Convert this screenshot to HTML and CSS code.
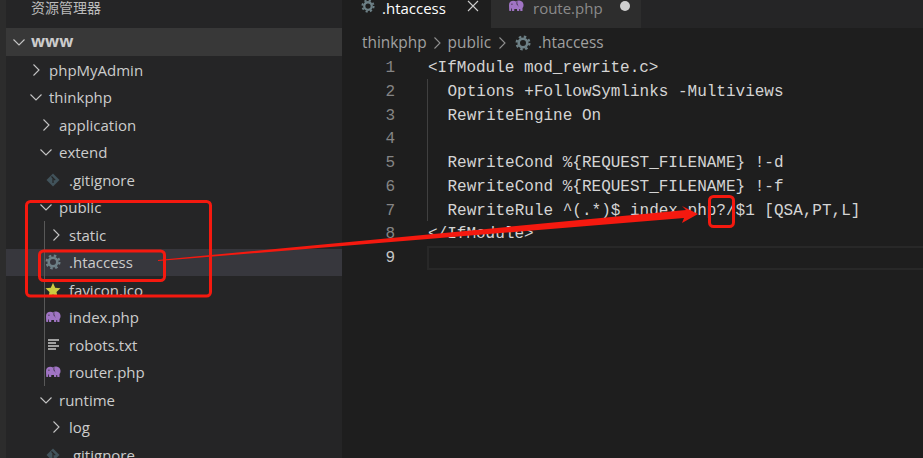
FILE: index.html
```html
<!DOCTYPE html>
<html lang="zh">
<head>
<meta charset="utf-8">
<title>.htaccess - thinkphp</title>
<link rel="stylesheet" href="styles.css">
</head>
<body>
<svg class="defs" width="0" height="0" aria-hidden="true">
  <symbol id="gear" viewBox="0 0 16 16">
    <circle cx="8" cy="8" r="4.3" fill="none" stroke="currentColor" stroke-width="2.6"/>
    <circle cx="8" cy="8" r="6.4" fill="none" stroke="currentColor" stroke-width="2.2" stroke-dasharray="2.5 2.53"/>
  </symbol>
  <symbol id="php" viewBox="0 0 16 12">
    <path fill="currentColor" d="M1 5C1 2.200 3 .8 5.300 .8c1.200 0 2 .3 2.700 .8C8.800 .8 10 .4 11.400 .6c2.300 .3 3.900 1.800 4.100 3.800.1 1.300-.1 2.600-1 3.500v2.800c0 .3-.2 .4-.5 .4h-1.300c-.3 0-.5-.2-.5-.5V8.900l-.9 .1v1.600c0 .3-.2 .5-.5 .5H9.500c-.3 0-.5-.2-.5-.5V9.100H6.300v1.500c0 .3-.2 .5-.5 .5H4.400c-.3 0-.5-.2-.5-.5V8.800L3.100 8.300v2.300c0 .3-.2 .5-.5 .5h-.9c-.3 0-.5-.2-.5-.5Z"/>
    <path fill="none" stroke="#252526" stroke-width=".7" stroke-linecap="round" d="M9 1.800C8.600 3.200 8.800 4.900 10 5.700M3.500 4.200h.8"/>
  </symbol>
  <symbol id="right" viewBox="0 0 16 16">
    <path fill="none" stroke="currentColor" stroke-width="1.100" d="M5.500 2.500 11 8l-5.500 5.500"/>
  </symbol>
  <symbol id="down" viewBox="0 0 16 16">
    <path fill="none" stroke="currentColor" stroke-width="1.100" d="M2.500 5.500 8 11l5.500-5.500"/>
  </symbol>
  <symbol id="git" viewBox="0 0 16 16">
    <path fill="currentColor" d="M8 1.500 14.500 8 8 14.500 1.500 8Z"/>
    <path fill="none" stroke="#252526" stroke-width="1.200" d="M6.500 4.500 10.200 8.200M8 6v5"/>
  </symbol>
</svg>

<div class="window">
  <div class="strip"></div>

  <aside class="sidebar">
    <div class="explorer-title">资源管理器</div>
    <div class="section"><svg class="chev"><use href="#down"/></svg><span>www</span></div>
    <div class="tree">
      <div class="row l1"><svg class="chev"><use href="#right"/></svg><span>phpMyAdmin</span></div>
      <div class="row l1"><svg class="chev"><use href="#down"/></svg><span>thinkphp</span></div>
      <div class="row l2"><svg class="chev"><use href="#right"/></svg><span>application</span></div>
      <div class="row l2"><svg class="chev"><use href="#down"/></svg><span>extend</span></div>
      <div class="row l3"><svg class="ficon git"><use href="#git"/></svg><span>.gitignore</span></div>
      <div class="row l2"><svg class="chev"><use href="#down"/></svg><span>public</span></div>
      <div class="guided">
        <div class="row l3c"><svg class="chev"><use href="#right"/></svg><span>static</span></div>
        <div class="row l3 selected"><svg class="ficon gear"><use href="#gear"/></svg><span>.htaccess</span></div>
        <div class="row l3"><svg class="ficon star" viewBox="0 0 16 16"><path fill="currentColor" d="M8 .8 10.200 5.700l5.300 .6-4 3.600 1.100 5.300L8 12.500l-4.600 2.700 1.100-5.300-4-3.600 5.300-.6Z"/></svg><span>favicon.ico</span></div>
        <div class="row l3"><svg class="ficon php"><use href="#php"/></svg><span>index.php</span></div>
        <div class="row l3"><svg class="ficon lines" viewBox="0 0 16 16"><path fill="none" stroke="currentColor" stroke-width="1.300" d="M3 3h11M3 6h8M3 9h11M3 12h8"/></svg><span>robots.txt</span></div>
        <div class="row l3"><svg class="ficon php"><use href="#php"/></svg><span>router.php</span></div>
      </div>
      <div class="row l2"><svg class="chev"><use href="#down"/></svg><span>runtime</span></div>
      <div class="row l3c"><svg class="chev"><use href="#right"/></svg><span>log</span></div>
      <div class="row l3"><svg class="ficon git"><use href="#git"/></svg><span>.gitignore</span></div>
    </div>
  </aside>

  <main class="editor">
    <div class="tabs">
      <div class="tab active">
        <svg class="tab-icon gear"><use href="#gear"/></svg>
        <span class="tab-name">.htaccess</span>
        <svg class="tab-close" viewBox="0 0 12 12"><path fill="none" stroke="currentColor" stroke-width="1.100" d="M1 1l10 10M11 1 1 11"/></svg>
      </div>
      <div class="tab inactive">
        <svg class="tab-icon php"><use href="#php"/></svg>
        <span class="tab-name">route.php</span>
        <span class="tab-dot"></span>
      </div>
    </div>
    <div class="crumbs">
      <span>thinkphp</span><svg class="crumb-sep"><use href="#right"/></svg>
      <span>public</span><svg class="crumb-sep"><use href="#right"/></svg>
      <svg class="crumb-icon gear"><use href="#gear"/></svg><span>.htaccess</span>
    </div>
    <div class="code-area">
      <div class="gutter">
        <div class="num">1</div><div class="num">2</div><div class="num">3</div><div class="num">4</div><div class="num">5</div><div class="num">6</div><div class="num">7</div><div class="num">8</div><div class="num current">9</div>
      </div>
      <div class="code">
        <div class="line">&lt;IfModule mod_rewrite.c&gt;</div>
        <div class="indented">
          <div class="line">Options +FollowSymlinks -Multiviews</div>
          <div class="line">RewriteEngine On</div>
          <div class="line">&nbsp;</div>
          <div class="line">RewriteCond %{REQUEST_FILENAME} !-d</div>
          <div class="line">RewriteCond %{REQUEST_FILENAME} !-f</div>
          <div class="line">RewriteRule ^(.*)$ index.php?/$1 [QSA,PT,L]</div>
        </div>
        <div class="line">&lt;/IfModule&gt;</div>
        <div class="active-line">&nbsp;</div>
      </div>
    </div>
  </main>
</div>

<svg class="marks" viewBox="0 0 923 458" aria-hidden="true">
  <rect class="mark" x="26.500" y="201.500" width="184" height="94.500" rx="4"/>
  <rect class="mark" x="39.500" y="251" width="125" height="29.500" rx="4"/>
  <rect class="mark" x="709.500" y="196.500" width="24" height="30" rx="4"/>
  <polygon class="arrow" points="158,260 686,210 682,206 698,214 682,223 684,218 158,261"/>
</svg>
</body>
</html>
```
FILE: styles.css
```css
* { box-sizing: border-box; }
html, body { margin: 0; height: 100%; background: #1e1e1e; overflow: hidden; }
.defs { position: absolute; }
.window {
  display: flex;
  width: 923px;
  height: 458px;
  overflow: hidden;
  font-family: "Open Sans", "Noto Sans CJK SC", sans-serif;
  color: #cccccc;
}
.strip { width: 6px; flex: none; background: #2c2c2c; }

/* sidebar */
.sidebar { width: 336px; flex: none; background: #252526; overflow: hidden; }
.explorer-title {
  height: 28px;
  padding: 0 0 0 25px;
  font-size: 14px;
  line-height: 14px;
  color: #bbbbbb;
  font-family: "Noto Sans CJK SC", sans-serif;
}
.section {
  height: 28px;
  display: flex;
  align-items: center;
  background: #383838;
  padding-left: 5px;
  padding-bottom: 3px;
  font-size: 16.500px;
  font-weight: 700;
}
.section .chev { margin-right: 4px; margin-top: 3px; }
.row {
  height: 27.500px;
  display: flex;
  align-items: center;
  font-size: 15px;
  white-space: nowrap;
}
.chev { width: 16px; height: 16px; flex: none; color: #c5c5c5; margin-right: 5px; }
.l1 { padding-left: 22px; }
.l2 { padding-left: 32px; }
.l3c { padding-left: 42px; }
.l3 { padding-left: 39px; }
.ficon { width: 16px; height: 16px; flex: none; margin-right: 8px; }
.selected { background: #37373d; }
.git { color: #41535b; }
.gear { color: #6d8086; }
.star { color: #cbcb41; }
.php { color: #a074c4; }
.lines { color: #cccccc; }
.guided { position: relative; }
.guided::before {
  content: "";
  position: absolute;
  left: 38px;
  top: 0;
  bottom: 0;
  width: 1px;
  background: #585858;
}

/* editor */
.editor { flex: 1; min-width: 0; background: #1e1e1e; display: flex; flex-direction: column; }
.tabs { height: 28px; display: flex; background: #252526; flex: none; }
.tab { height: 28px; display: flex; font-size: 15px; line-height: 16px; }
.tab.active { width: 149px; background: #1e1e1e; color: #ffffff; padding-left: 18px; }
.tab.inactive { width: 150px; background: #2d2d2d; color: #8a8a8a; padding-left: 17px; }
.tab-icon { width: 16px; height: 14px; flex: none; }
.tab.active .tab-icon { margin-right: 6px; margin-top: -1px; }
.tab.inactive .tab-icon { margin-right: 9px; margin-top: -1px; }
.tab-close { width: 12px; height: 12px; flex: none; margin: 0 0 0 21px; color: #cccccc; }
.tab-dot { width: 10px; height: 10px; border-radius: 50%; background: #d0d0d0; margin: 1px 0 0 17px; }
.crumbs {
  height: 27px;
  flex: none;
  display: flex;
  align-items: center;
  padding-left: 20px;
  padding-top: 2px;
  font-size: 15.400px;
  color: #a0a0a0;
}
.crumb-sep { width: 16px; height: 16px; flex: none; color: #909090; margin: 0 2.500px; }
.crumb-icon { width: 16px; height: 16px; flex: none; margin: 0 7px 0 3px; }
.code-area {
  flex: 1;
  display: flex;
  font-family: "Liberation Mono", monospace;
  font-size: 16px;
  line-height: 23.750px;
  color: #d4d4d4;
}
.gutter { width: 85px; flex: none; padding-right: 32px; text-align: right; color: #858585; }
.num { height: 23.750px; padding-top: 2px; }
.current { color: #c6c6c6; }
.code { flex: 1; padding-left: 1px; }
.line { height: 23.750px; padding-top: 2px; white-space: pre; }
.indented { margin-left: -1px; padding-left: 19.500px; border-left: 1px solid #404040; }
.active-line { margin-left: -1px; margin-top: 1px; height: 23.750px; line-height: 20px; border: 2px solid #282828; border-right: none; }

/* annotation overlay */
.marks { position: absolute; left: 0; top: 0; width: 923px; height: 458px; }
.mark { fill: none; stroke: #f5190f; stroke-width: 3; }
.arrow { fill: #f5190f; }
```
